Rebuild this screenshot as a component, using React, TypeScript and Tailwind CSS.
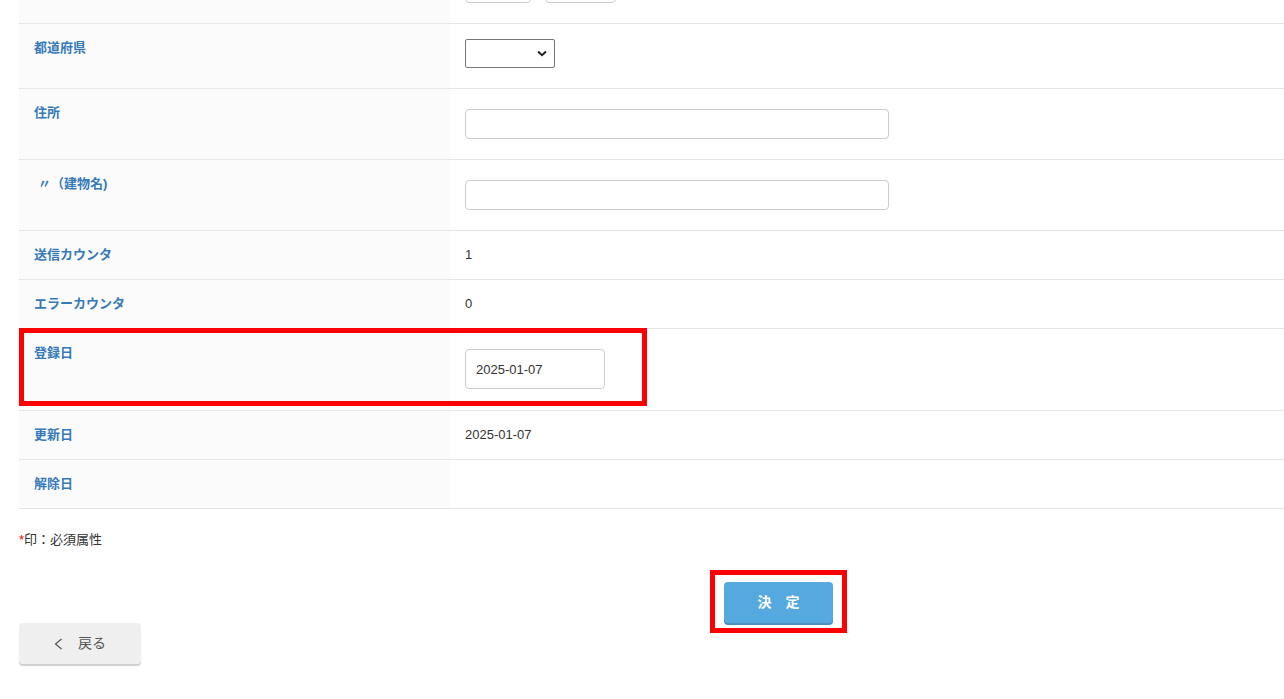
import React from 'react';

const font = { fontFamily: '"Liberation Sans", "Noto Sans CJK JP", sans-serif' };

function Row({ label, children, valueClass = 'pt-[15px] pb-[15px]' }: { label?: React.ReactNode; children?: React.ReactNode; valueClass?: string }) {
  return (
    <div className="flex border-b border-[#e6e6e6]">
      <div className="w-[431px] shrink-0 bg-[#fbfbfb] pl-[15px] pt-[15px] pb-[15px] text-[13px] leading-[18px] font-bold text-[#3579b8]">
        {label}
      </div>
      <div className={`flex-1 bg-white pl-[15px] text-[13px] leading-[18px] text-[#333] ${valueClass}`}>{children}</div>
    </div>
  );
}

function TextInput({ w, h = 'h-[30px]' }: { w: string; h?: string }) {
  return <input type="text" className={`${w} ${h} block border border-[#cccccc] rounded-[4px] bg-white px-[10px] outline-none`} />;
}

export default function App() {
  return (
    <div className="w-full h-[699px] overflow-hidden bg-white" style={font}>
      <div className="ml-[19px] mt-[-41px]">
        {/* Form table */}
        <div>
          <Row valueClass="pt-[15px] pb-[20px]">
            <div className="flex gap-[14px]">
              <input type="text" className="w-[66px] h-[29px] border border-[#cccccc] rounded-[4px] bg-white" />
              <input type="text" className="w-[71px] h-[29px] border border-[#cccccc] rounded-[4px] bg-white" />
            </div>
          </Row>
          <Row label="都道府県" valueClass="pt-[15px] pb-[20px]">
            <div className="relative w-[90px] h-[29px]">
              <select className="appearance-none w-full h-full border border-[#767676] rounded-[2px] bg-white pl-[4px] outline-none">
                <option value=""></option>
              </select>
              <svg className="absolute right-[8px] top-[11px] pointer-events-none" width="10" height="7" viewBox="0 0 10 7">
                <polyline points="1,1.5 5,5.2 9,1.5" fill="none" stroke="#222" strokeWidth="2" />
              </svg>
            </div>
          </Row>
          <Row label="住所" valueClass="py-[20px]">
            <TextInput w="w-[424px]" />
          </Row>
          <Row label={<span className="ml-[4px]">〃（建物名)</span>} valueClass="py-[20px]">
            <TextInput w="w-[424px]" />
          </Row>
          <Row label="送信カウンタ">1</Row>
          <Row label="エラーカウンタ">0</Row>
          <div className="relative">
            <Row label="登録日" valueClass="pt-[20px] pb-[21px]">
              <input
                type="text"
                defaultValue="2025-01-07"
                className="block w-[140px] h-[40px] border border-[#cccccc] rounded-[4px] bg-white pl-[10px] text-[13px] text-[#333] outline-none"
              />
            </Row>
            <div className="absolute left-0 top-[-1px] w-[628px] h-[78px] border-[5px] border-[#ff0000] pointer-events-none" />
          </div>
          <Row label="更新日">2025-01-07</Row>
          <Row label="解除日" />
        </div>

        {/* Note */}
        <p className="mt-[22px] text-[13px] leading-[18px] text-[#333]">
          <span className="text-[#ff0000]">*</span>印：必須属性
        </p>

        {/* Submit */}
        <div className="mt-[33px] ml-[705px] w-[109px]">
          <div className="relative">
            <button className="w-[109px] h-[41px] rounded-[4px] bg-[#55a9df] shadow-[0_2px_0_#4a8fbd] text-white text-[14px] font-bold">
              決　定
            </button>
            <div className="absolute left-[-14px] top-[-12px] w-[137px] h-[63px] border-[5px] border-[#ff0000] pointer-events-none" />
          </div>
        </div>

        {/* Back */}
        <button className="flex items-center justify-center gap-[15px] w-[122px] h-[41px] rounded-[4px] bg-[#efefef] shadow-[0_2px_1px_#cfcfcf] text-[14px] text-[#555]">
          <svg width="9" height="12" viewBox="0 0 9 12">
            <polyline points="7.5,1 1.5,6 7.5,11" fill="none" stroke="#555" strokeWidth="1.2" />
          </svg>
          <span>戻る</span>
        </button>
      </div>
    </div>
  );
}
